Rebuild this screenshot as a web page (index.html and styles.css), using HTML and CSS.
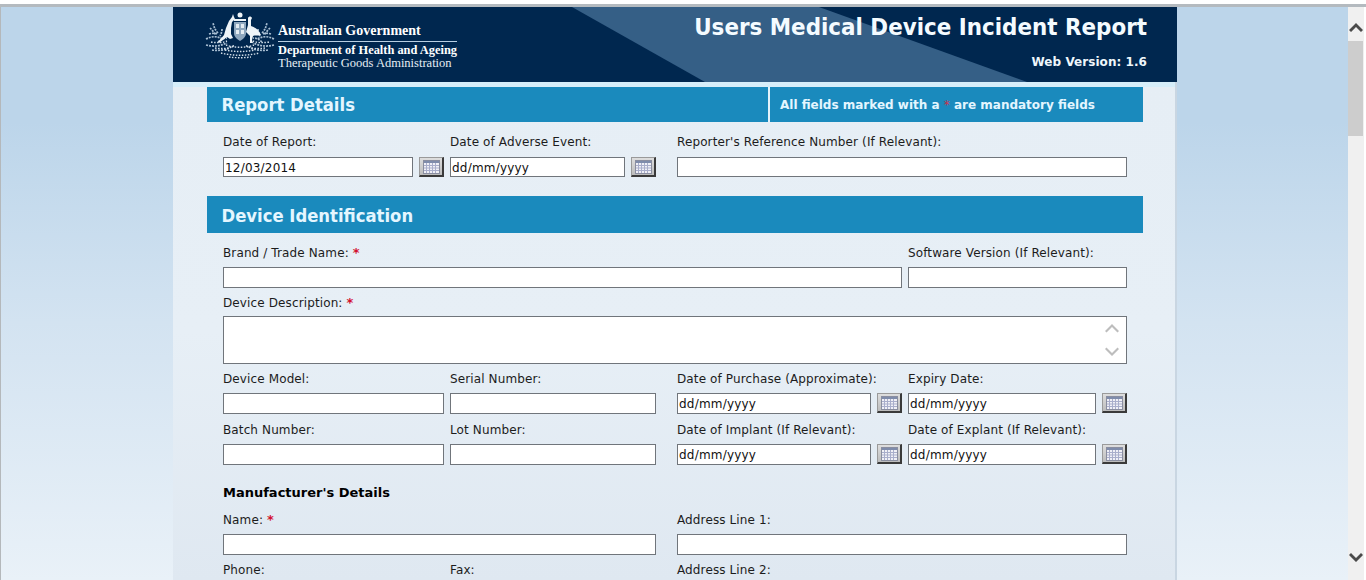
FILE: index.html
```html
<!DOCTYPE html>
<html lang="en">
<head>
<meta charset="utf-8">
<title>Users Medical Device Incident Report</title>
<link rel="stylesheet" href="styles.css">
</head>
<body>
<div class="topline"></div>
<div class="viewport">
  <div class="stage">
    <div class="page">
      <header class="banner">
        <svg class="banner-art" width="1004" height="75" viewBox="0 0 1004 75" aria-hidden="true">
          <polygon points="399,0 646,0 854,75 532,75" fill="#355f86"/>
        </svg>
        <div class="brand">
          <svg class="crest" width="70" height="48" viewBox="0 0 70 48" aria-hidden="true">
            <g fill="none" stroke="#a9bfd3" stroke-width="1.700" stroke-dasharray="2 1">
              <path d="M1 27c6-3 11-3 17 0M1 33c8 2 14 1 21-2M7 38c7 1 14 0 19-3M13 21c-3-3-4-6-5-10M4 22c3-1 6-1 8 0M13 30c3-3 6-4 9-4M5 16c2 2 4 4 5 7M17 17c0 3-1 5-2 7"/>
              <path d="M69 27c-6-3-11-3-17 0M69 33c-8 2-14 1-21-2M63 38c-7 1-14 0-19-3M57 21c3-3 4-6 5-10M66 22c-3-1-6-1-8 0M57 30c-3-3-6-4-9-4M65 16c-2 2-4 4-5 7M53 17c0 3 1 5 2 7"/>
            </g>
            <g fill="none" stroke="#d4e0ea" stroke-width="1.400" stroke-dasharray="1.500 1.500">
              <path d="M6 30c6 1 11 1 16-1M10 36c7 1 14 1 20-3M16 41c12 3 26 3 38 0M24 45c7 1 15 1 22 0M64 30c-6 1-11 1-16-1M60 36c-7 1-14 1-20-3M21 33c8 3 20 3 28 0M20 38c10 2 20 2 30 0"/>
            </g>
            <g fill="#eef4f8">
              <circle cx="35" cy="3" r="2.500"/>
              <path d="M29 7h12v2H29z"/>
              <path d="M27 5l1-3 1 3 1 2-3 3-1 6 0 6 2 4-3 1-3-2-8 6-1-1 6-7 2-7 3-7z"/>
              <path d="M43 6c1-2 3-2 4 0l-1 2 0 6c4 1 8 4 10 9-3 1-6 0-8 1l-1 4 1 3-3 0 0-7-4-4 2-7z"/>
            </g>
            <path d="M29 10h12v11c0 4-3 6-6 8-3-2-6-4-6-8z" fill="#8ea7be"/>
            <path d="M31 12h3v4h-3zM36 12h3v4h-3zM31 18h3v4h-3zM36 18h3v4h-3z" fill="#e4ecf2"/>
          </svg>
          <div class="agency">
            <div class="gov">Australian Government</div>
            <div class="dept">Department of Health and Ageing</div>
            <div class="tga">Therapeutic Goods Administration</div>
          </div>
        </div>
        <div class="titles">
          <h1 class="title">Users Medical Device Incident Report</h1>
          <div class="version">Web Version: 1.6</div>
        </div>
      </header>

      <main class="panel">
        <section class="bar bar-report">
          <h2 class="bar-title">Report Details</h2>
          <p class="bar-note">All fields marked with a <span class="req">*</span> are mandatory fields</p>
        </section>
        <div class="form form-report">
          <div class="row">
            <div class="field w221">
              <label class="lbl">Date of Report:</label>
              <div class="date"><input class="inp short" type="text" value="12/03/2014"><span class="cal"><svg width="17" height="14" viewBox="0 0 17 14"><use href="#calgrid"/></svg></span></div>
            </div>
            <div class="field w206">
              <label class="lbl">Date of Adverse Event:</label>
              <div class="date"><input class="inp short" type="text" value="dd/mm/yyyy"><span class="cal"><svg width="17" height="14" viewBox="0 0 17 14"><use href="#calgrid"/></svg></span></div>
            </div>
            <div class="field w450 right">
              <label class="lbl">Reporter's Reference Number (If Relevant):</label>
              <input class="inp short" type="text">
            </div>
          </div>
        </div>

        <section class="bar bar-device">
          <h2 class="bar-title">Device Identification</h2>
        </section>
        <div class="form form-device">
          <div class="row">
            <div class="field w679">
              <label class="lbl">Brand / Trade Name: <span class="req">*</span></label>
              <input class="inp" type="text">
            </div>
            <div class="field w219">
              <label class="lbl">Software Version (If Relevant):</label>
              <input class="inp" type="text">
            </div>
          </div>
          <div class="field desc">
            <label class="lbl tight">Device Description: <span class="req">*</span></label>
            <div class="area">
              <svg class="area-arrows" width="14" height="34" viewBox="0 0 14 34" aria-hidden="true">
                <path d="M0 8l7-7 7 7-1.500 1.500L7 4 1.500 9.500z" fill="#bdbdbd"/>
                <path d="M0 26l7 7 7-7-1.500-1.500L7 30l-5.500-5.500z" fill="#bdbdbd"/>
              </svg>
            </div>
          </div>
          <div class="row spaced-a">
            <div class="field w221"><label class="lbl">Device Model:</label><input class="inp" type="text"></div>
            <div class="field w206"><label class="lbl">Serial Number:</label><input class="inp" type="text"></div>
            <div class="field w225 right">
              <label class="lbl">Date of Purchase (Approximate):</label>
              <div class="date"><input class="inp" type="text" value="dd/mm/yyyy"><span class="cal"><svg width="17" height="14" viewBox="0 0 17 14"><use href="#calgrid"/></svg></span></div>
            </div>
            <div class="field w219">
              <label class="lbl">Expiry Date:</label>
              <div class="date"><input class="inp" type="text" value="dd/mm/yyyy"><span class="cal"><svg width="17" height="14" viewBox="0 0 17 14"><use href="#calgrid"/></svg></span></div>
            </div>
          </div>
          <div class="row spaced-b">
            <div class="field w221"><label class="lbl">Batch Number:</label><input class="inp" type="text"></div>
            <div class="field w206"><label class="lbl">Lot Number:</label><input class="inp" type="text"></div>
            <div class="field w225 right">
              <label class="lbl">Date of Implant (If Relevant):</label>
              <div class="date"><input class="inp" type="text" value="dd/mm/yyyy"><span class="cal"><svg width="17" height="14" viewBox="0 0 17 14"><use href="#calgrid"/></svg></span></div>
            </div>
            <div class="field w219">
              <label class="lbl">Date of Explant (If Relevant):</label>
              <div class="date"><input class="inp" type="text" value="dd/mm/yyyy"><span class="cal"><svg width="17" height="14" viewBox="0 0 17 14"><use href="#calgrid"/></svg></span></div>
            </div>
          </div>
          <h3 class="sub">Manufacturer's Details</h3>
          <div class="row spaced-c">
            <div class="field w433"><label class="lbl">Name: <span class="req">*</span></label><input class="inp" type="text"></div>
            <div class="field w450 right"><label class="lbl">Address Line 1:</label><input class="inp" type="text"></div>
          </div>
          <div class="row spaced-d">
            <div class="field w221"><label class="lbl">Phone:</label><input class="inp" type="text"></div>
            <div class="field w206"><label class="lbl">Fax:</label><input class="inp" type="text"></div>
            <div class="field w450 right"><label class="lbl">Address Line 2:</label><input class="inp" type="text"></div>
          </div>
        </div>
      </main>
    </div>
  </div>
  <aside class="scrollbar" aria-hidden="true">
    <svg class="sb-arrow" width="14" height="10" viewBox="0 0 14 10"><path d="M0 7l7-7 7 7-2 2-5-5-5 5z" fill="#4a4a4a"/></svg>
    <div class="sb-thumb"></div>
    <svg class="sb-arrow sb-down" width="14" height="10" viewBox="0 0 14 10"><path d="M0 2l7 7 7-7-2-2-5 5-5-5z" fill="#4a4a4a"/></svg>
  </aside>
</div>
<svg class="defs" width="0" height="0" aria-hidden="true">
  <defs>
    <g id="calgrid">
      <rect x="0.500" y="0.500" width="16" height="13" fill="#f0f0f6" stroke="#8a8ea0"/>
      <rect x="1" y="1" width="15" height="2" fill="#7f8cab"/>
      <path d="M1 5.500h15M1 8h15M1 10.500h15M3.500 3v10M6.500 3v10M9.500 3v10M12.500 3v10" stroke="#a9aecb" stroke-width="1" fill="none"/>
    </g>
  </defs>
</svg>
</body>
</html>
```
FILE: styles.css
```css
* { box-sizing: border-box; }
html, body { margin: 0; height: 580px; overflow: hidden; }
body { display: flex; flex-direction: column; background: #fff; font-family: "DejaVu Sans", "Liberation Sans", sans-serif; }
.defs { position: absolute; }
.topline { height: 7px; flex: none; background: #fff; border-bottom: 3px solid #b4babf; }
.viewport { flex: 1; display: flex; min-height: 0; }
.stage { flex: 1; min-width: 0; padding-left: 172px; border-left: 1px solid #b4b8bb; background: linear-gradient(#bcd5ea 0, #bcd5ea 20%, #d3e3f1 55%, #e9f1f8 100%); }
.page { width: 1004px; height: 100%; display: flex; flex-direction: column; }

.banner { position: relative; flex: none; height: 75px; background: #00274f; display: flex; justify-content: space-between; color: #fff; overflow: hidden; }
.banner-art { position: absolute; left: 0; top: 0; }
.brand { position: relative; display: flex; margin-left: 32px; padding-top: 5px; }
.crest { flex: none; }
.agency { margin-left: 3px; padding-top: 11px; font-family: "Liberation Serif", serif; color: #fff; width: 180px; }
.gov { font-size: 14px; font-weight: 700; line-height: 15px; padding-bottom: 3px; border-bottom: 1px solid #b9cfe2; width: 179px; white-space: nowrap; }
.dept { font-size: 12.400px; font-weight: 700; line-height: 14px; margin-top: 1px; white-space: nowrap; }
.tga { font-size: 12.500px; line-height: 13px; color: #e6eef5; white-space: nowrap; }
.titles { position: relative; text-align: right; padding-right: 30px; }
.title { margin: 6px 0 0; font-size: 23.850px; line-height: 29px; font-weight: 700; font-stretch: condensed; white-space: nowrap; color: #f4fbff; }
.version { margin-top: 12px; font-size: 12px; line-height: 16px; font-weight: 700; letter-spacing: .05px; color: #eef6fb; }

.panel { flex: 1; min-height: 0; overflow: hidden; padding: 5px 0 0 34px; background: linear-gradient(#e6eef5, #e7eff6 50%, #dfe8f1); border-right: 2px solid #c9d6e2; box-shadow: inset 0 5px 0 #d6eefa; }
.bar { width: 936px; background: #1a8abd; color: #e4f6ff; display: flex; align-items: center; }
.bar-report { height: 35px; }
.bar-device { height: 37px; margin-top: 19px; }
.bar-title { margin: 0; padding: 2px 0 0 14.500px; font-size: 18.300px; line-height: 24px; font-weight: 700; font-stretch: condensed; white-space: nowrap; }
.bar-report .bar-title { width: 563px; height: 100%; padding-top: 6px; border-right: 2px solid #e4f3fb; }
.bar-note { margin: 0; padding-left: 10px; font-size: 12px; font-weight: 700; white-space: nowrap; }
.req { color: #d3102f; font-weight: 700; font-size: 13px; line-height: 12px; }
.bar-note .req { color: #c8324f; font-size: 12px; font-weight: 400; }

.form { padding-left: 16px; width: 920px; color: #111; }
.form-report { padding-top: 12px; }
.form-device { padding-top: 11px; }
.form-device .lbl { padding-top: 1px; }
.row { display: flex; gap: 6px; }
.field { flex: none; display: flex; flex-direction: column; }
.right { margin-left: 15px; }
.w221 { width: 221px; }
.w206 { width: 206px; }
.w225 { width: 225px; }
.w219 { width: 219px; }
.w450 { width: 450px; }
.w679 { width: 679px; }
.w433 { width: 433px; }
.lbl { display: block; height: 16px; margin-bottom: 7px; font-size: 12px; line-height: 16px; letter-spacing: .12px; color: #1c1c1c; white-space: nowrap; }
.form-device .lbl.tight { margin-bottom: 6px; }
.date { display: flex; gap: 6px; }
.inp { display: block; width: 100%; min-width: 0; height: 21px; padding: 0 1px; border: 1px solid #70757b; border-radius: 0; background: #fff; font: 12px/18px "DejaVu Sans", sans-serif; letter-spacing: .2px; color: #111; }
.inp.short { height: 20px; padding-top: 2px; }
.date .inp { flex: 1; width: auto; }
.cal { flex: none; width: 25px; height: 20px; display: flex; align-items: center; justify-content: center; background: linear-gradient(#dedede, #bcbcbc); border: 1px solid #9a9a9a; border-right: 2px solid #3a3a3a; border-bottom: 2px solid #3a3a3a; }
.cal svg { display: block; }
.desc { margin-top: 6px; }
.area { position: relative; width: 904px; height: 48px; background: #fff; border: 1px solid #70757b; }
.area-arrows { position: absolute; right: 7px; top: 6px; }
.spaced-a { margin-top: 6px; }
.spaced-b { margin-top: 7px; }
.sub { margin: 19px 0 0; height: 16px; padding-top: 1px; font-size: 13px; line-height: 16px; font-weight: 700; color: #000; }
.spaced-c { margin-top: 11px; }
.spaced-d { margin-top: 6px; }

.scrollbar { position: relative; flex: none; width: 18px; background: linear-gradient(90deg, #f0f0f0 0, #f0f0f0 16px, #fff 16px); display: flex; flex-direction: column; align-items: center; padding-right: 3px; }
.sb-arrow { flex: none; margin-top: 16px; }
.sb-thumb { flex: none; width: 15px; height: 95px; margin-top: 8px; background: #cdcdcd; }
.sb-down { margin-top: auto; margin-bottom: 17px; }
```
